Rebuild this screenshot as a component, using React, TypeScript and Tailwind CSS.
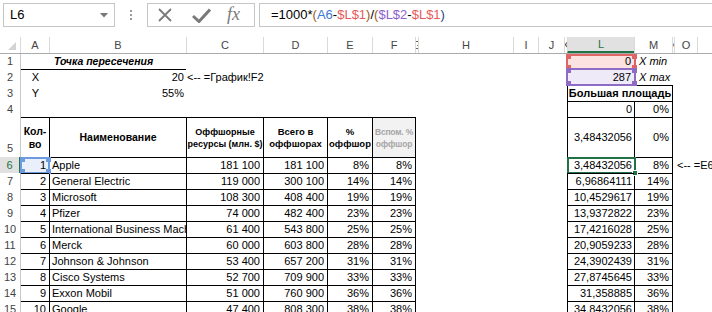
import type { ReactNode } from 'react';

const rows = [
  ['Apple', '181 100', '181 100', '8%', '8%', '3,48432056', '8%'],
  ['General Electric', '119 000', '300 100', '14%', '14%', '6,96864111', '14%'],
  ['Microsoft', '108 300', '408 400', '19%', '19%', '10,4529617', '19%'],
  ['Pfizer', '74 000', '482 400', '23%', '23%', '13,9372822', '23%'],
  ['International Business Machines', '61 400', '543 800', '25%', '25%', '17,4216028', '25%'],
  ['Merck', '60 000', '603 800', '28%', '28%', '20,9059233', '28%'],
  ['Johnson & Johnson', '53 400', '657 200', '31%', '31%', '24,3902439', '31%'],
  ['Cisco Systems', '52 700', '709 900', '33%', '33%', '27,8745645', '33%'],
  ['Exxon Mobil', '51 000', '760 900', '36%', '36%', '31,358885', '36%'],
  ['Google', '47 400', '808 300', '38%', '38%', '34,8432056', '38%'],
];

const headCols = [
  { l: 'A', w: 'w-[28px]' },
  { l: 'B', w: 'w-[137px]' },
  { l: 'C', w: 'w-[77px]' },
  { l: 'D', w: 'w-[64px]' },
  { l: 'E', w: 'w-[45px]' },
  { l: 'F', w: 'w-[43px]' },
  { l: 'G', w: 'w-[3px]' },
  { l: 'H', w: 'w-[95px]' },
  { l: 'I', w: 'w-[25px]' },
  { l: 'J', w: 'w-[26px]' },
  { l: 'K', w: 'w-[3px]' },
  { l: 'L', w: 'w-[67px]' },
  { l: 'M', w: 'w-[38px]' },
  { l: 'N', w: 'w-[2px]' },
  { l: 'O', w: 'w-[23px]' },
];

function Cell({ w, className = '', children }: { w: string; className?: string; children?: ReactNode }) {
  return (
    <div className={`${w} shrink-0 h-full flex items-center whitespace-nowrap ${className}`}>{children}</div>
  );
}

function Row({ n, h, sel, bottom, children }: { n: number; h: string; sel?: boolean; bottom?: boolean; children?: ReactNode }) {
  return (
    <div className={`flex ${h}`}>
      <div
        className={`w-[21px] shrink-0 h-full flex justify-center text-[11px] ${
          bottom ? 'items-end pb-[1px]' : 'items-center'
        } ${sel ? 'bg-[#e1e1e1] text-[#217346] border-r-2 border-[#217346]' : 'text-[#444] border-r border-[#c8c8c8]'}`}
      >
        {n}
      </div>
      {children}
    </div>
  );
}

function Corners({ bg }: { bg: string }) {
  return (
    <>
      <div className={`absolute -left-[2px] -top-[2px] w-[5px] h-[5px] ${bg}`} />
      <div className={`absolute -right-[3px] -top-[2px] w-[5px] h-[5px] ${bg}`} />
      <div className={`absolute -left-[2px] -bottom-[2px] w-[5px] h-[5px] ${bg}`} />
      <div className={`absolute -right-[3px] -bottom-[2px] w-[5px] h-[5px] ${bg}`} />
    </>
  );
}

export default function App() {
  return (
    <div className="w-[712px] h-[312px] overflow-hidden bg-white text-black font-['Liberation_Sans',Arial,sans-serif] text-[11px]">
      {/* Formula bar */}
      <div className="h-[37px] flex items-start pt-[3px]">
        <div className="ml-[3px] w-[112px] h-[24px] shrink-0 border border-[#c6c6c6] flex items-center justify-between pl-[6px] pr-[6px] text-[13px]">
          <span>L6</span>
          <svg width="8" height="5" viewBox="0 0 8 5">
            <path d="M0 0 H8 L4 4.5 Z" fill="#777" />
          </svg>
        </div>
        <div className="w-[32px] h-[24px] shrink-0 flex flex-col items-center justify-center gap-[2px]">
          <div className="w-[2px] h-[2px] bg-[#9a9a9a]" />
          <div className="w-[2px] h-[2px] bg-[#9a9a9a]" />
          <div className="w-[2px] h-[2px] bg-[#9a9a9a]" />
        </div>
        <div className="w-[108px] h-[24px] shrink-0 border border-[#c6c6c6] flex items-center pl-[9px]">
          <svg width="16" height="16" viewBox="0 0 16 16">
            <path d="M2 2 L14 14 M14 2 L2 14" stroke="#7a7a7a" strokeWidth="1.8" fill="none" />
          </svg>
          <svg width="19" height="15" viewBox="0 0 19 15" className="ml-[19px]">
            <path d="M1 8 L7 13.5 L18 1.5" stroke="#7a7a7a" strokeWidth="3" fill="none" strokeLinejoin="miter" />
          </svg>
          <span className="ml-[16px] font-['Liberation_Serif',serif] italic text-[18px] text-[#7a7a7a] leading-none -mt-[2px]">
            fx
          </span>
        </div>
        <div className="ml-[4px] flex-1 h-[24px] border-y border-l border-[#c6c6c6] pl-[11px] flex items-center text-[13px] whitespace-nowrap">
          <span>=1000*</span>
          <span className="text-[#9a5a14]">(</span>
          <span className="text-[#3c78d8]">A6</span>
          <span>-</span>
          <span className="text-[#e8595d]">$L$1</span>
          <span className="text-[#9a5a14]">)</span>
          <span>/</span>
          <span className="text-[#9a5a14]">(</span>
          <span className="text-[#8e5fce]">$L$2</span>
          <span>-</span>
          <span className="text-[#e8595d]">$L$1</span>
          <span className="text-[#1f3f7a]">)</span>
        </div>
      </div>

      {/* Column headers */}
      <div className="flex h-[17px] border-b border-[#ababab]">
        <div className="w-[21px] shrink-0 h-full border-r border-[#dadada] flex items-end justify-end pr-[4px] pb-[3px]">
          <svg width="8" height="8" viewBox="0 0 8 8">
            <path d="M8 0 V8 H0 Z" fill="#d3d3d3" />
          </svg>
        </div>
        {headCols.map((c, i) => (
          <div
            key={c.l}
            className={`${c.w} shrink-0 h-full overflow-hidden flex items-center justify-center text-[11px] ${
              i > 0 ? 'border-l border-[#dadada]' : ''
            } ${c.l === 'L' ? 'bg-[#e1e1e1] text-[#217346] border-b-2 border-b-[#217346]' : 'text-[#444]'}`}
          >
            {c.l}
          </div>
        ))}
        <div className="flex-1 border-l border-[#dadada]" />
      </div>

      {/* Row 1 */}
      <Row n={1} h="h-[15px]">
        <Cell w="w-[165px]" className="justify-center font-bold italic text-[10.5px]">
          Точка пересечения
        </Cell>
        <Cell w="w-[77px]" />
        <Cell w="w-[64px]" />
        <Cell w="w-[45px]" />
        <Cell w="w-[43px]" />
        <Cell w="w-[3px]" />
        <Cell w="w-[95px]" />
        <Cell w="w-[25px]" />
        <Cell w="w-[26px]" />
        <Cell w="w-[3px]" />
        <Cell w="w-[67px]" className="relative justify-end pr-[3px]">
          <div className="absolute -left-[1px] -right-[2px] top-0 -bottom-[1px] border-2 border-[#e06666] bg-[#fde2e2]">
            <Corners bg="bg-[#e06666]" />
          </div>
          <span className="relative">0</span>
        </Cell>
        <Cell w="w-[38px]" className="pl-[5px] italic">
          X min
        </Cell>
        <div className="flex-1" />
      </Row>

      {/* Row 2 */}
      <Row n={2} h="h-[16px]">
        <Cell w="w-[28px]" className="justify-center pl-[1px] border-t border-black">
          X
        </Cell>
        <Cell w="w-[137px]" className="justify-end pr-[2px] border-t border-black">
          20
        </Cell>
        <Cell w="w-[77px]" className="pl-[1px]">
          {'<-- =График!F2'}
        </Cell>
        <Cell w="w-[64px]" />
        <Cell w="w-[45px]" />
        <Cell w="w-[43px]" />
        <Cell w="w-[3px]" />
        <Cell w="w-[95px]" />
        <Cell w="w-[25px]" />
        <Cell w="w-[26px]" />
        <Cell w="w-[3px]" />
        <Cell w="w-[67px]" className="relative justify-end pr-[3px]">
          <div className="absolute -left-[1px] -right-[2px] -top-[1px] -bottom-[1px] border-2 border-[#8e6bc4] bg-[#efeaf8]">
            <Corners bg="bg-[#8e6bc4]" />
          </div>
          <span className="relative">287</span>
        </Cell>
        <Cell w="w-[38px]" className="pl-[5px] italic">
          X max
        </Cell>
        <div className="flex-1" />
      </Row>

      {/* Row 3 */}
      <Row n={3} h="h-[16px]">
        <Cell w="w-[28px]" className="justify-center pl-[1px]">
          Y
        </Cell>
        <Cell w="w-[137px]" className="justify-end pr-[2px]">
          55%
        </Cell>
        <Cell w="w-[77px]" />
        <Cell w="w-[64px]" />
        <Cell w="w-[45px]" />
        <Cell w="w-[43px]" />
        <Cell w="w-[3px]" />
        <Cell w="w-[95px]" />
        <Cell w="w-[25px]" />
        <Cell w="w-[26px]" />
        <Cell w="w-[3px]" />
        <Cell w="w-[105px]" className="justify-center font-bold border-l border-t border-black">
          Большая площадь
        </Cell>
        <Cell w="w-[2px]" className="border-l border-black" />
        <div className="flex-1" />
      </Row>

      {/* Row 4 */}
      <Row n={4} h="h-[16px]">
        <Cell w="w-[28px]" />
        <Cell w="w-[137px]" />
        <Cell w="w-[77px]" />
        <Cell w="w-[64px]" />
        <Cell w="w-[45px]" />
        <Cell w="w-[43px]" />
        <Cell w="w-[3px]" />
        <Cell w="w-[95px]" />
        <Cell w="w-[25px]" />
        <Cell w="w-[26px]" />
        <Cell w="w-[3px]" />
        <Cell w="w-[67px]" className="justify-end pr-[2px] border-l border-t border-black">
          0
        </Cell>
        <Cell w="w-[38px]" className="justify-end pr-[3px] border-l border-t border-black">
          0%
        </Cell>
        <Cell w="w-[2px]" className="border-l border-black" />
        <div className="flex-1" />
      </Row>

      {/* Row 5 - table header */}
      <Row n={5} h="h-[40px]" bottom>
        <Cell w="w-[28px]" className="flex-col justify-center font-bold text-[10.5px] leading-[13px] border-t border-black">
          <span>Кол-</span>
          <span>во</span>
        </Cell>
        <Cell w="w-[137px]" className="justify-center font-bold text-[10.5px] border-l border-t border-black">
          Наименование
        </Cell>
        <Cell w="w-[77px]" className="flex-col justify-center font-bold text-[9px] leading-[12px] border-l border-t border-black">
          <span>Оффшорные</span>
          <span>ресурсы (млн. $)</span>
        </Cell>
        <Cell w="w-[64px]" className="flex-col justify-center font-bold text-[9.5px] leading-[12px] border-l border-t border-black">
          <span>Всего в</span>
          <span>оффшорах</span>
        </Cell>
        <Cell w="w-[45px]" className="flex-col justify-center font-bold text-[9.5px] leading-[12px] border-l border-t border-black">
          <span>%</span>
          <span>оффшор</span>
        </Cell>
        <Cell w="w-[43px]" className="flex-col justify-center font-bold text-[8.5px] tracking-[-0.2px] leading-[12px] text-[#a6a6a6] bg-[#f2f2f2] border-l border-t border-black">
          <span>Вспом. %</span>
          <span>оффшор</span>
        </Cell>
        <Cell w="w-[3px]" className="border-l border-black" />
        <Cell w="w-[95px]" />
        <Cell w="w-[25px]" />
        <Cell w="w-[26px]" />
        <Cell w="w-[3px]" />
        <Cell w="w-[67px]" className="justify-end pr-[2px] border-l border-t border-black">
          3,48432056
        </Cell>
        <Cell w="w-[38px]" className="justify-end pr-[3px] border-l border-t border-black">
          0%
        </Cell>
        <Cell w="w-[2px]" className="border-l border-black" />
        <div className="flex-1" />
      </Row>

      {/* Data rows */}
      {rows.map((r, i) => (
        <Row key={i} n={6 + i} h="h-[16px]" sel={i === 0}>
          <Cell w="w-[28px]" className="relative justify-end pr-[3px] border-t border-black">
            {i === 0 && (
              <div className="absolute -left-[1px] -right-[1px] -top-[1px] -bottom-[1px] border-2 border-[#6d9ae0] bg-[#e9effb]">
                <Corners bg="bg-[#6d9ae0]" />
              </div>
            )}
            <span className="relative">{i + 1}</span>
          </Cell>
          <Cell w="w-[137px]" className="pl-[2px] overflow-hidden border-l border-t border-black">
            {r[0]}
          </Cell>
          <Cell w="w-[77px]" className="justify-end pr-[3px] border-l border-t border-black">
            {r[1]}
          </Cell>
          <Cell w="w-[64px]" className="justify-end pr-[3px] border-l border-t border-black">
            {r[2]}
          </Cell>
          <Cell w="w-[45px]" className="justify-end pr-[3px] border-l border-t border-black">
            {r[3]}
          </Cell>
          <Cell w="w-[43px]" className="justify-end pr-[3px] border-l border-t border-black">
            {r[4]}
          </Cell>
          <Cell w="w-[3px]" className="border-l border-black" />
          <Cell w="w-[95px]" />
          <Cell w="w-[25px]" />
          <Cell w="w-[26px]" />
          <Cell w="w-[3px]" />
          <Cell w="w-[67px]" className="relative justify-end pr-[2px] border-l border-t border-black">
            {i === 0 && (
              <div className="absolute -left-[1px] -right-[2px] -top-[1px] -bottom-[1px] border-2 border-[#217346]">
                <div className="absolute -right-[4px] -bottom-[4px] w-[6px] h-[6px] bg-[#217346] border border-white" />
              </div>
            )}
            <span className="relative">{r[5]}</span>
          </Cell>
          <Cell w="w-[38px]" className="justify-end pr-[3px] border-l border-t border-black">
            {r[6]}
          </Cell>
          <Cell w="w-[2px]" className="border-l border-black" />
          <Cell w="w-[23px]" className="pl-[3px]">
            {i === 0 ? '<-- =E6' : ''}
          </Cell>
          <div className="flex-1" />
        </Row>
      ))}
    </div>
  );
}
